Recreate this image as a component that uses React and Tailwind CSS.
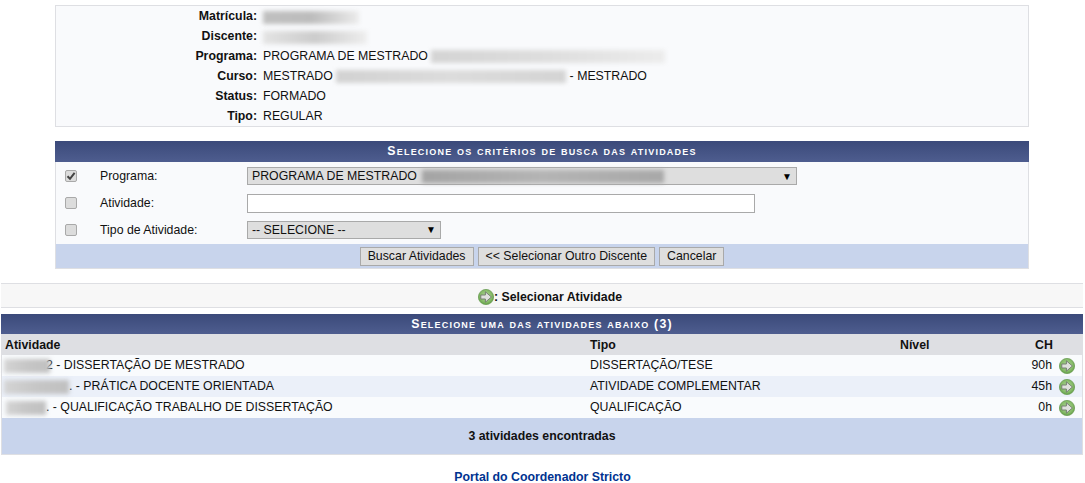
import React from "react";

const Blur = ({ w, h = 13, tone = "bg-[#c4c4c4]", className = "" }) => (
  <span className={`inline-block align-middle blur-[2px] ${tone} ${className}`} style={{ width: w, height: h }} />
);

const GoIcon = ({ id }) => (
  <svg width="16" height="16" viewBox="0 0 16 16" className="shrink-0">
    <defs>
      <radialGradient id={id} cx="50%" cy="45%" r="60%">
        <stop offset="0%" stopColor="#b4d9a0" />
        <stop offset="65%" stopColor="#86bb68" />
        <stop offset="100%" stopColor="#57953c" />
      </radialGradient>
    </defs>
    <circle cx="8" cy="8" r="7.6" fill={`url(#${id})`} stroke="#6c9e56" strokeWidth="0.8" />
    <path d="M2.8 6H7.4V2.8L13.4 8L7.4 13.2V10H2.8Z" fill="#dfe1dd" stroke="#6f786c" strokeWidth="0.9" />
  </svg>
);

const Check = ({ checked }) => (
  <span className="w-[12px] h-[12px] rounded-[2px] border border-[#a9a9a9] bg-[#dcdcdc] flex items-center justify-center">
    {checked && (
      <svg width="10" height="10" viewBox="0 0 10 10">
        <path d="M1.5 5.2L4 7.8L8.6 1.8" fill="none" stroke="#444" strokeWidth="2" />
      </svg>
    )}
  </span>
);

const Caret = () => <span className="text-[10px] leading-none text-black">▼</span>;

const Btn = ({ children }) => (
  <button className="h-[19px] px-[7px] bg-[#dedede] border border-[#a9a9a9] text-[12.32px] leading-none text-[#111]">
    {children}
  </button>
);

const Band = ({ children, className = "" }) => (
  <div
    className={`flex items-center justify-center bg-gradient-to-b from-[#3b4a7a] to-[#4e5d8f] text-white font-bold text-[12.32px] tracking-[1.2px] [font-variant:small-caps] ${className}`}
  >
    {children}
  </div>
);

const infoRows = [
  ["Matrícula:", <Blur w={96} tone="bg-gradient-to-r from-[#c0c0c0] via-[#bcbcbc] to-[#ececec]" className="mt-[1px]" />],
  ["Discente:", <Blur w={104} tone="bg-gradient-to-r from-[#e4e4e4] via-[#cccccc] to-[#eeeeee]" className="mt-[1px]" />],
  ["Programa:", <>PROGRAMA DE MESTRADO <Blur w={234} tone="bg-gradient-to-r from-[#d4d4d4] via-[#dedede] to-[#ececec]" /></>],
  ["Curso:", <>MESTRADO <Blur w={230} tone="bg-gradient-to-r from-[#d2d2d2] via-[#dcdcdc] to-[#d4d4d4]" /> - MESTRADO</>],
  ["Status:", "FORMADO"],
  ["Tipo:", "REGULAR"],
];

const atividades = [
  { blur: 46, left: 3, resto: "2 - DISSERTAÇÃO DE MESTRADO", tipo: "DISSERTAÇÃO/TESE", ch: "90h", bg: "bg-[#f9fbfd]", overlap: "-mr-[4px]" },
  { blur: 65, left: 3, resto: ". - PRÁTICA DOCENTE ORIENTADA", tipo: "ATIVIDADE COMPLEMENTAR", ch: "45h", bg: "bg-[#ebf0f9]", overlap: "mr-0" },
  { blur: 40, left: 5, resto: ". - QUALIFICAÇÃO TRABALHO DE DISSERTAÇÃO", tipo: "QUALIFICAÇÃO", ch: "0h", bg: "bg-[#f9fbfd]", overlap: "mr-0" },
];

export default function App() {
  return (
    <div className="w-[1085px] h-[483px] overflow-hidden bg-white pt-[5px] text-[12.32px] text-[#111] font-['Liberation_Sans',Arial,sans-serif]">
      <div className="ml-[55px] w-[974px] border border-[#dedfe3] bg-[#f9fafc]">
        {infoRows.map(([label, value]) => (
          <div key={label} className="flex h-[20px] items-center">
            <div className="w-[201px] text-right font-bold">{label}</div>
            <div className="ml-[6px] whitespace-pre">{value}</div>
          </div>
        ))}
      </div>

      <div className="ml-[55px] mt-[14px] w-[974px] border-x border-b border-[#dedfe3] bg-[#f9fafc]">
        <Band className="-mx-px h-[21px]">Selecione os critérios de busca das atividades</Band>
        <div className="flex h-[28px] items-center">
          <div className="w-[44px] pl-[9px]"><Check checked /></div>
          <div className="w-[147px]">Programa:</div>
          <div className="flex h-[18px] w-[550px] items-center bg-[#dedede] border border-[#a9a9a9] pl-[4px] pr-[4px]">
            <span>PROGRAMA DE MESTRADO</span>
            <Blur w={242} tone="bg-gradient-to-r from-[#a4a4a4] via-[#b4b4b4] to-[#a8a8a8]" className="ml-[5px]" />
            <span className="ml-auto"><Caret /></span>
          </div>
        </div>
        <div className="flex h-[26px] items-center">
          <div className="w-[44px] pl-[9px]"><Check /></div>
          <div className="w-[147px]">Atividade:</div>
          <input className="h-[19px] w-[508px] bg-white border border-[#a9a9a9]" />
        </div>
        <div className="flex h-[28px] items-center">
          <div className="w-[44px] pl-[9px]"><Check /></div>
          <div className="w-[147px]">Tipo de Atividade:</div>
          <div className="flex h-[18px] w-[194px] items-center justify-between bg-[#dedede] border border-[#a9a9a9] pl-[4px] pr-[4px]">
            <span>-- SELECIONE --</span>
            <Caret />
          </div>
        </div>
        <div className="flex h-[24px] items-center justify-center gap-[4px] bg-[#c8d4ec]">
          <Btn>Buscar Atividades</Btn>
          <Btn>&lt;&lt; Selecionar Outro Discente</Btn>
          <Btn>Cancelar</Btn>
        </div>
      </div>

      <div className="ml-[1px] mt-[14px] flex h-[25px] w-[1082px] items-center justify-center border-y border-[#dedfe3] bg-[#f7f7f7] font-bold pl-[16px] pt-[3px]">
        <GoIcon id="go-top" />
        <span>: Selecionar Atividade</span>
      </div>

      <div className="ml-[1px] mt-[6px] w-[1082px] border-x border-b border-[#dedfe3]">
        <Band className="-mx-px h-[20px]">Selecione uma das atividades abaixo (3)</Band>
        <div className="flex h-[21px] items-center bg-[#dedfe3] font-bold pl-[3px] pt-[1px]">
          <div className="w-[585px]">Atividade</div>
          <div className="w-[310px]">Tipo</div>
          <div className="w-[135px]">Nível</div>
          <div>CH</div>
        </div>
        {atividades.map((a, i) => (
          <div key={a.tipo} className={`flex h-[21px] items-center ${a.bg}`}>
            <div className="w-[588px] whitespace-nowrap" style={{ paddingLeft: a.left - 1 }}>
              <Blur w={a.blur} h={14} tone="bg-gradient-to-r from-[#d4d4d4] via-[#c6c6c6] to-[#c0c0c0]" className={`relative z-10 ${a.overlap}`} />
              {a.resto}
            </div>
            <div className="w-[412px]">{a.tipo}</div>
            <div className="ml-auto flex items-center gap-[7px] pr-[7px]">
              <span>{a.ch}</span>
              <span className="mt-[1px]"><GoIcon id={`go-${i}`} /></span>
            </div>
          </div>
        ))}
        <div className="flex h-[36px] items-center justify-center bg-[#c8d4ec] font-bold">3 atividades encontradas</div>
      </div>

      <div className="mt-[13px] text-center font-bold text-[#003390]">Portal do Coordenador Stricto</div>
    </div>
  );
}
